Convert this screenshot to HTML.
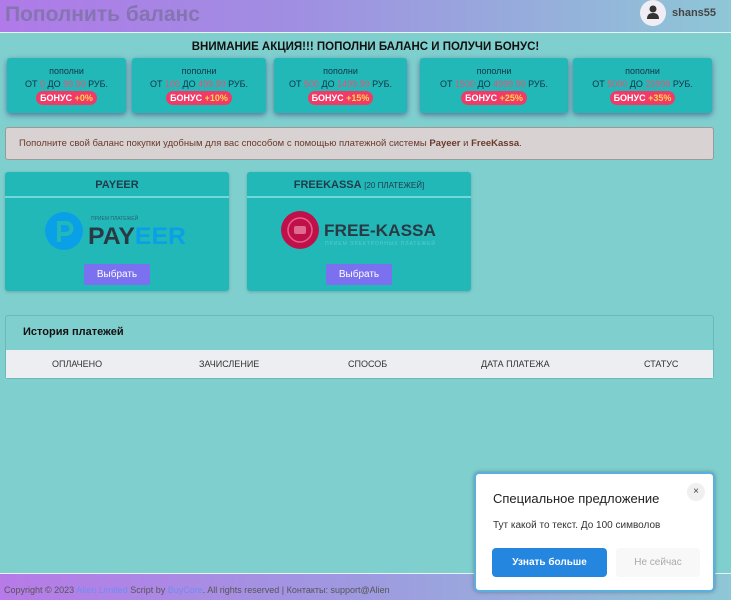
<!DOCTYPE html>
<html><head><meta charset="utf-8"><style>
*{box-sizing:border-box;margin:0;padding:0}
body{width:731px;height:600px;overflow:hidden;background:#7fcfcf;font-family:"Liberation Sans",sans-serif;position:relative}
.hdr{position:absolute;left:0;top:0;width:731px;height:33px;background:linear-gradient(90deg,#b07ae8,#a08ee2 40%,#8ec7d6);border-bottom:1px solid #e8f4f4}
.hdr h1{position:absolute;left:5px;top:3px;font-size:21px;font-weight:bold;color:#8474b0}
.av{position:absolute;left:640px;top:0;width:26px;height:26px;border-radius:50%;background:#f0eef4}
.user{position:absolute;left:672px;top:7px;font-size:11px;font-weight:bold;color:#444}
.ttl{position:absolute;top:41px;left:0;width:731px;text-align:center;font-size:11.5px;font-weight:bold;color:#111}
.pc{position:absolute;top:58px;height:55px;background:#23b8b8;border-radius:3px;box-shadow:0 2px 6px rgba(60,50,110,.6);text-align:center;font-size:9px;color:#134}
.pc .a{margin-top:8px}
.pc .b{margin-top:3px}
.r{color:#f0506e}
.bon{display:inline-block;margin-top:2px;background:#f03a68;color:#fff;font-weight:bold;border-radius:8px;padding:2px 4px;font-size:9px}
.bon span{color:#ffd54a}
.alert{position:absolute;left:5px;top:127px;width:709px;height:33px;background:#d8d2d2;border:1px solid #999;border-radius:3px;font-size:9.5px;color:#6b3a2a;padding:10px 13px}
.pay{position:absolute;top:172px;width:224px;height:119px;background:#23b8b8;border-radius:3px;box-shadow:0 1px 3px rgba(0,0,0,.2)}
.pay .h{height:26px;border-bottom:2px solid #6fd8d8;text-align:center;font-size:11px;font-weight:bold;color:#1f3b4b;padding-top:7px}
.btn{position:absolute;left:79px;top:92px;width:66px;height:21px;background:#7a70f0;color:#fff;font-size:10px;text-align:center;line-height:21px;border-radius:2px}
.hist{position:absolute;left:5px;top:315px;width:709px;height:64px;background:#7fcfcf;border:1px solid #6ab8b8;border-radius:3px}
.hist .t{position:absolute;left:17px;top:10px;font-size:11px;font-weight:bold;color:#111}
.hist .row{position:absolute;left:0;top:34px;width:707px;height:28px;background:#eceef1;font-size:9px;color:#333}
.row span{position:absolute;top:9px}
.ft{position:absolute;left:0;top:573px;width:731px;height:27px;background:linear-gradient(90deg,#b77ae8,#9e9ae0 50%,#8ec7d6);border-top:1px solid #e8f4f4;font-size:9px;color:#555;padding:11px 4px}
.ft b{font-weight:normal;color:#6e8ef0}
.pop{position:absolute;left:474px;top:472px;width:241px;height:120px;background:#fff;border:2px solid #5aaee0;border-radius:5px;box-shadow:0 0 4px rgba(0,0,0,.3)}
.pop .t{position:absolute;left:17px;top:17px;font-size:13px;color:#222}
.pop .x{position:absolute;left:211px;top:9px;width:18px;height:18px;border-radius:50%;background:#f0f0f0;font-size:10px;text-align:center;line-height:17px;color:#444}
.pop .d{position:absolute;left:17px;top:46px;font-size:10px;color:#333}
.pop .b1{position:absolute;left:16px;top:74px;width:115px;height:29px;background:#2586e0;color:#fff;font-size:10px;font-weight:bold;text-align:center;line-height:29px;border-radius:4px}
.pop .b2{position:absolute;left:140px;top:74px;width:84px;height:29px;background:#f8f8f8;color:#aaa;font-size:10px;text-align:center;line-height:29px;border-radius:4px}
</style></head><body>
<div class="hdr"><h1>Пополнить баланс</h1>
<div class="av"><svg width="26" height="26"><circle cx="13" cy="9" r="3.5" fill="#333"/><path d="M7 19 Q7 13 13 13 Q19 13 19 19Z" fill="#333"/></svg></div>
<div class="user">shans55</div></div>
<div class="ttl">ВНИМАНИЕ АКЦИЯ!!! ПОПОЛНИ БАЛАНС И ПОЛУЧИ БОНУС!</div>
<div class="pc" style="left:7px;width:119px"><div class="a">пополни</div><div class="b">ОТ <span class="r">0</span> ДО <span class="r">99.99</span> РУБ.</div><div class="bon">БОНУС <span>+0%</span></div></div>
<div class="pc" style="left:132px;width:134px"><div class="a">пополни</div><div class="b">ОТ <span class="r">100</span> ДО <span class="r">499.99</span> РУБ.</div><div class="bon">БОНУС <span>+10%</span></div></div>
<div class="pc" style="left:274px;width:133px"><div class="a">пополни</div><div class="b">ОТ <span class="r">500</span> ДО <span class="r">1499.99</span> РУБ.</div><div class="bon">БОНУС <span>+15%</span></div></div>
<div class="pc" style="left:420px;width:148px"><div class="a">пополни</div><div class="b">ОТ <span class="r">1500</span> ДО <span class="r">4999.99</span> РУБ.</div><div class="bon">БОНУС <span>+25%</span></div></div>
<div class="pc" style="left:573px;width:139px"><div class="a">пополни</div><div class="b">ОТ <span class="r">5000</span> ДО <span class="r">29999</span> РУБ.</div><div class="bon">БОНУС <span>+35%</span></div></div>
<div class="alert">Пополните свой баланс покупки удобным для вас способом с помощью платежной системы <b>Payeer</b> и <b>FreeKassa</b>.</div>
<div class="pay" style="left:5px"><div class="h">PAYEER</div>
<svg style="position:absolute;left:39px;top:39px" width="150" height="42"><circle cx="20" cy="20" r="19" fill="#0aa0e8"/><path d="M15 31 V12 H22 a5 5 0 0 1 0 11 H15" stroke="#23b8b8" stroke-width="4" fill="none"/><text x="47" y="9" font-size="5" fill="#2a6070" font-family="Liberation Sans">ПРИЕМ ПЛАТЕЖЕЙ</text><text x="44" y="33" font-size="24" font-weight="bold" fill="#2a3a44" font-family="Liberation Sans" textLength="98" lengthAdjust="spacingAndGlyphs">PAY<tspan fill="#0aa0e8">EER</tspan></text></svg>
<div class="btn">Выбрать</div></div>
<div class="pay" style="left:247px"><div class="h">FREEKASSA <span style="font-size:8px;font-weight:normal">[20 ПЛАТЕЖЕЙ]</span></div>
<svg style="position:absolute;left:32px;top:38px" width="165" height="42"><circle cx="21" cy="20" r="19" fill="#c0104a"/><circle cx="21" cy="20" r="12" fill="none" stroke="#e8608a" stroke-width="1.5"/><rect x="15" y="16" width="12" height="8" rx="2" fill="#e06a90"/><text x="45" y="26" font-size="17" font-weight="bold" fill="#2a3a44" font-family="Liberation Sans" textLength="112" lengthAdjust="spacingAndGlyphs">FREE-KASSA</text><text x="46" y="35" font-size="5" fill="#5cc" font-family="Liberation Sans" textLength="110">ПРИЕМ ЭЛЕКТРОННЫХ ПЛАТЕЖЕЙ</text></svg>
<div class="btn">Выбрать</div></div>
<div class="hist"><div class="t">История платежей</div><div class="row"><span style="left:46px">ОПЛАЧЕНО</span><span style="left:193px">ЗАЧИСЛЕНИЕ</span><span style="left:342px">СПОСОБ</span><span style="left:475px">ДАТА ПЛАТЕЖА</span><span style="left:638px">СТАТУС</span></div></div>
<div class="ft">Copyright © 2023 <b>Alien Limited</b> Script by <b>BuyCore</b>. All rights reserved | Контакты: support@Alien</div>
<div class="pop"><div class="t">Специальное предложение</div><div class="x">×</div><div class="d">Тут какой то текст. До 100 символов</div><div class="b1">Узнать больше</div><div class="b2">Не сейчас</div></div>
</body></html>
